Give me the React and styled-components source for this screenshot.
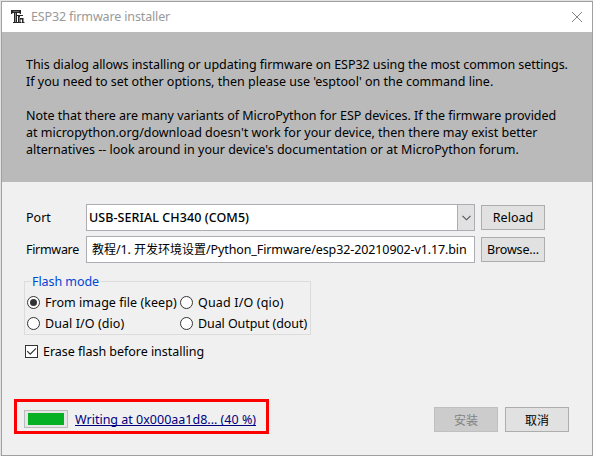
import React from 'react';
import styled, { createGlobalStyle } from 'styled-components';

const Global = createGlobalStyle`
  * { box-sizing: border-box; }
  body { margin: 0; background: #e3e3e3; }
`;

const Desktop = styled.div`
  width: 593px;
  height: 456px;
  padding: 1px 0 0 1px;
  overflow: hidden;
  font: 12.5px/17px "Noto Sans", "Noto Sans CJK SC", sans-serif;
  color: #000;
`;

const Dialog = styled.div`
  position: relative;
  width: 592px;
  height: 455px;
  border: 1px solid #a0a0a0;
  background: #f0f0f0;
  display: flex;
  flex-direction: column;
`;

const TitleBar = styled.header`
  height: 30px;
  flex: none;
  background: #fff;
  color: #999;
  display: flex;
  align-items: center;
  padding: 0 10px 0 9px;
`;

const Title = styled.span`
  flex: 1;
  margin-left: 6px;
  padding-bottom: 1px;
  letter-spacing: -0.14px;
`;

const Banner = styled.section`
  height: 150px;
  flex: none;
  background: #bababa;
  padding: 24px 0 0 24px;
`;

const Paragraph = styled.div`
  margin-bottom: 17px;
`;

const Text = styled.div`
  white-space: pre;
  letter-spacing: ${(p) => p.$track || 0}px;
`;

const Form = styled.div`
  display: grid;
  grid-template-columns: 60px 389px 64px;
  grid-template-rows: 27px 27px;
  row-gap: 5px;
  align-items: center;
  padding: 22px 0 0 24px;

  & > button { margin-left: 6px; }
`;

const Field = styled.div`
  height: 27px;
  background: #fff;
  border: 1px solid #abadb3;
  display: flex;
  align-items: center;
  white-space: pre;
`;

const ComboValue = styled.span`
  flex: 1;
  padding-left: 2px;
  font-weight: 500;
  letter-spacing: 0.07px;
`;

const DropButton = styled.span`
  width: 18px;
  height: 27px;
  margin-right: -1px;
  border: 1px solid #abadb3;
  background: #e1e1e1;
  display: flex;
  align-items: center;
  justify-content: center;
`;

const PathValue = styled.span`
  padding: 0 0 2px 5px;
  letter-spacing: -0.11px;
`;

const Han = styled.span`
  font: 12px/17px "Noto Sans CJK SC", sans-serif;
  letter-spacing: 0;
`;

const Button = styled.button`
  width: 64px;
  height: 25px;
  padding: 0;
  border: 1px solid #adadad;
  background: #e1e1e1;
  color: #000;
  font: inherit;
  letter-spacing: ${(p) => p.$track || 0}px;

  &:disabled {
    background: #cccccc;
    border-color: #bfbfbf;
    color: #838383;
  }
`;

const Group = styled.fieldset`
  width: 287px;
  height: 62px;
  margin: 10px 0 0 22px;
  padding: 2px 0 0 2px;
  border: 1px solid #dcdcdc;
  display: grid;
  grid-template-columns: 153px 130px;
  grid-auto-rows: 21px;
`;

const Legend = styled.legend`
  margin-left: 4px;
  padding: 0 1px;
  color: #0046d5;
  letter-spacing: -0.07px;
`;

const Option = styled.label`
  display: flex;
  align-items: center;
  gap: 5px;
  white-space: pre;
  letter-spacing: ${(p) => p.$track || 0}px;
`;

const Check = styled(Option)`
  margin: 8px 0 0 23px;
`;

const Footer = styled.footer`
  margin-top: 47px;
  padding: 0 23px 0 22px;
  height: 25px;
  display: flex;
  align-items: center;
`;

const Progress = styled.div`
  width: 44px;
  height: 18px;
  margin-bottom: 1px;
  padding: 2px 3px;
  border: 1px solid #bcbcbc;
  background: #e6e6e6;
`;

const ProgressBar = styled.div`
  height: 12px;
  background: #06b025;
`;

const Status = styled.a`
  flex: 1;
  margin-left: 7px;
  color: #000080;
  text-decoration: underline;
  text-decoration-thickness: 1px;
  text-decoration-skip-ink: none;
  text-underline-offset: 1px;
  white-space: pre;
`;

const Actions = styled.div`
  display: flex;
  gap: 7px;
`;

const Highlight = styled.div`
  position: absolute;
  left: 12px;
  top: 397px;
  width: 255px;
  height: 35px;
  border: 3px solid #ff0000;
`;

const AppIcon = () => (
  <svg width="14" height="14" viewBox="0 0 14 14">
    <path d="M0 0h10v4H9l-.5-1H6v9h1v1H2v-1h1V3H1.5L1 4H0z" fill="#262626" />
    <path d="M4.5 3v9" stroke="#8a8a8a" />
    <path d="M2 1.5h6" stroke="#666" />
    <path d="M6 5h6v1H9v2h3.5v4h1v1h-3v-1h.5V9.5H9.5V12h.5v1H7V6H6z" fill="#262626" />
    <path d="M8.5 7v5" stroke="#777" />
  </svg>
);

const CloseIcon = () => (
  <svg width="10" height="10" viewBox="0 0 10 10" stroke="#858585">
    <path d="M0 0l10 10M10 0L0 10" />
  </svg>
);

const Radio = ({ on }) => (
  <svg width="13" height="13" viewBox="0 0 13 13">
    <circle cx="6.5" cy="6.5" r="6" fill="#fff" stroke="#333" />
    {on && <circle cx="6.5" cy="6.5" r="3.5" fill="#333" />}
  </svg>
);

const CheckBox = () => (
  <svg width="13" height="13" viewBox="0 0 13 13">
    <rect x=".5" y=".5" width="12" height="12" fill="#fff" stroke="#333" />
    <path d="M2.2 6.2l3 3 5.8-5.8" fill="none" stroke="#333" strokeWidth="1.2" />
  </svg>
);

export default function App() {
  return (
    <Desktop>
      <Global />
      <Dialog>
        <TitleBar>
          <AppIcon />
          <Title>ESP32 firmware installer</Title>
          <CloseIcon />
        </TitleBar>
        <Banner>
          <Paragraph>
            <Text $track={-0.05}>This dialog allows installing or updating firmware on ESP32 using the most common settings.</Text>
            <Text>If you need to set other options, then please use 'esptool' on the command line.</Text>
          </Paragraph>
          <Paragraph>
            <Text $track={-0.02}>Note that there are many variants of MicroPython for ESP devices. If the firmware provided</Text>
            <Text>at micropython.org/download doesn't work for your device, then there may exist better</Text>
            <Text $track={0.01}>alternatives -- look around in your device's documentation or at MicroPython forum.</Text>
          </Paragraph>
        </Banner>
        <Form>
          <Text>Port</Text>
          <Field>
            <ComboValue>USB-SERIAL CH340 (COM5)</ComboValue>
            <DropButton>
              <svg width="9" height="6" viewBox="0 0 9 6" fill="none" stroke="#505050">
                <path d="M.5 .8l4 4 4-4" strokeWidth="1.1" />
              </svg>
            </DropButton>
          </Field>
          <Button>Reload</Button>
          <Text $track={-0.3}>Firmware</Text>
          <Field>
            <PathValue><Han>教程</Han>/1. <Han>开发环境设置</Han>/Python_Firmware/esp32-20210902-v1.17.bin</PathValue>
          </Field>
          <Button $track={-0.15}>Browse...</Button>
        </Form>
        <Group>
          <Legend>Flash mode</Legend>
          <Option $track={0.04}><Radio on />From image file (keep)</Option>
          <Option $track={0.16}><Radio />Quad I/O (qio)</Option>
          <Option $track={0.08}><Radio />Dual I/O (dio)</Option>
          <Option $track={-0.08}><Radio />Dual Output (dout)</Option>
        </Group>
        <Check $track={-0.03}><CheckBox />Erase flash before installing</Check>
        <Footer>
          <Progress><ProgressBar /></Progress>
          <Status>Writing at 0x000aa1d8... (40 %)</Status>
          <Actions>
            <Button disabled><Han>安装</Han></Button>
            <Button><Han>取消</Han></Button>
          </Actions>
        </Footer>
        <Highlight />
      </Dialog>
    </Desktop>
  );
}
